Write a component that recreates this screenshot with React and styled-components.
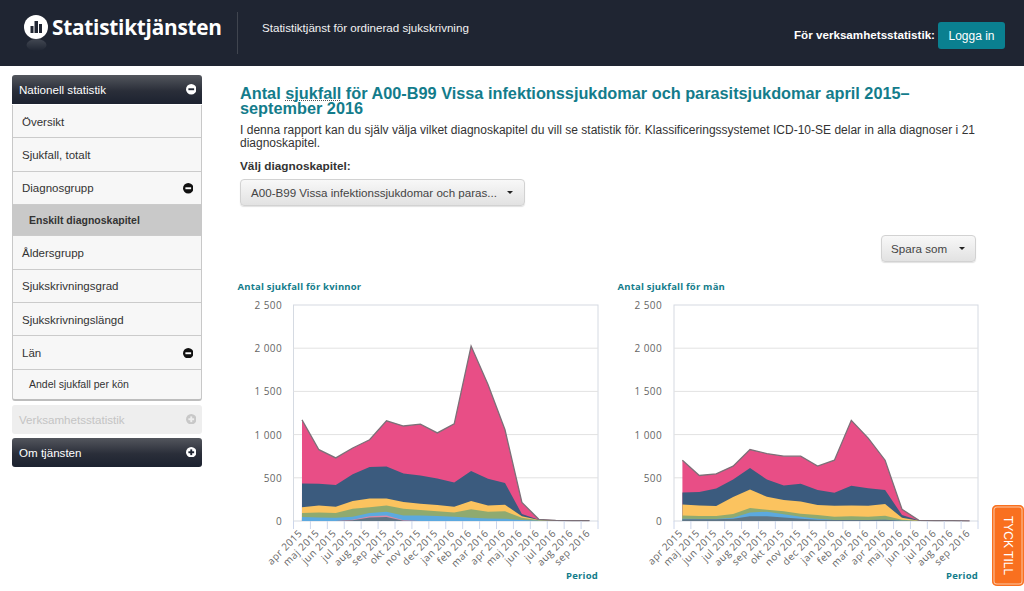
import React from "react";
import styled, { createGlobalStyle } from "styled-components";

const Global = createGlobalStyle`
  html, body { margin: 0; padding: 0; background: #fff; overflow: hidden; height: 591px; }
  body { font-family: "Liberation Sans", Arial, sans-serif; font-size: 12px; color: #333; }
  * { box-sizing: border-box; }
`;

const Page = styled.div`position: relative; width: 1024px; height: 591px; overflow: hidden;`;
const Header = styled.header`
  height: 66px; background: #1f2532; display: flex; align-items: flex-start; color: #fff;
`;
const Brand = styled.div`
  width: 237px; height: 42px; margin-top: 12px; padding-left: 24px; display: flex; align-items: flex-start; gap: 3px;
`;
const BrandName = styled.span`
  font-family: "Open Sans", sans-serif; font-weight: 700; font-size: 20.8px; line-height: 31px; letter-spacing: -0.25px; color: #fff;
`;
const Divider = styled.div`width: 1px; height: 42px; margin-top: 12px; background: #40454f;`;
const Tagline = styled.div`margin: 21px 0 0 24px; font-size: 11.6px; line-height: 14px; color: #f2f2f2; flex: 1;`;
const LoginLabel = styled.div`margin-top: 28px; font-weight: 700; font-size: 11.65px; line-height: 14px;`;
const LoginButton = styled.button`
  margin: 22px 19px 0 3px; width: 67px; height: 27px; background: #0a8090; color: #fff; border: 0; border-radius: 3px;
  font: 12px "Liberation Sans", sans-serif;
`;
const Body = styled.div`display: flex; padding-left: 12px;`;
const Sidebar = styled.nav`width: 190px; margin-top: 9px; flex: none;`;
const AccordionHead = styled.div`
  display: flex; align-items: center; justify-content: space-between; height: 29px; padding: 0 6px 0 7px;
  font-size: 11.6px; border-radius: ${p => p.$open ? "3px 3px 0 0" : "3px"};
  color: ${p => p.$disabled ? "#c4c4c4" : "#fff"};
  background: ${p => p.$disabled ? "#eeeeee" : "linear-gradient(#53565d, #2a2e39 55%, #1c2230)"};
  margin-top: ${p => p.$gap || 0}px;
`;
const Menu = styled.div`
  margin-top: 1px; border: 1px solid #c8c8c8; border-top: 0; border-bottom: 2px solid #bdbdbd; border-radius: 0 0 3px 3px; background: #f7f7f7;
`;
const MenuItem = styled.div`
  display: flex; align-items: center; justify-content: space-between; height: ${p => p.$h || 33.4}px;
  padding: ${p => p.$sub ? 0 : 1}px 8px 0 ${p => p.$sub ? 16 : 9}px; border-bottom: ${p => p.$last ? 0 : "1px solid #cbcbcb"};
  color: #333; font-size: ${p => p.$sub ? "10.5px" : "11.5px"};
  font-weight: ${p => p.$active ? 700 : 400};
  background: ${p => p.$active ? "#c9c9c9" : "transparent"};
`;
const Main = styled.main`flex: none; margin-left: 38px; padding-top: 18px; width: 736px;`;
const Title = styled.h1`
  margin: 0; padding-top: 2px; width: 680px; font-size: 16.3px; line-height: 15px; font-weight: 700; color: #137c8b;
`;
const Dotted = styled.abbr`text-decoration: underline dotted #555 1px; text-underline-offset: 1px;`;
const Lead = styled.p`
  margin: 8px 0 0; width: 735px; font-size: 12px; line-height: 13px; text-align: justify; color: #333;
`;
const Label = styled.div`margin-top: 9px; font-size: 11.8px; font-weight: 700; line-height: 14px; color: #333;`;
const Dropdown = styled.div`
  display: flex; align-items: center; justify-content: space-between; height: 27px; width: ${p => p.$w}px;
  padding: ${p => p.$pad}; border: 1px solid #d2d2d2; border-radius: 4px; white-space: nowrap;
  background: linear-gradient(#f8f8f8, #e2e2e2); box-shadow: 0 1px 1px rgba(0,0,0,.12);
  font-size: 11.6px; color: #444;
`;
const Caret = styled.i`
  width: 0; height: 0; border: 3.5px solid transparent; border-top-color: #222; border-bottom: 0; display: block;
`;
const SaveRow = styled.div`display: flex; justify-content: flex-end; margin: 29px 0 0;`;
const SelectWrap = styled.div`margin-top: 6px;`;
const Charts = styled.section`display: flex; margin: 15px 0 0 -10px;`;
const Feedback = styled.div`
  position: absolute; right: 0; top: 505px; width: 32px; height: 81px; background: #f9701f; border-radius: 5px;
  display: flex; align-items: center; justify-content: center; box-shadow: inset 0 0 0 1.5px #f9701f, inset 0 0 0 2.5px #fbc7a6;
`;
const FeedbackText = styled.span`
  writing-mode: vertical-rl; color: #fff; font-size: 12px; line-height: 14px; white-space: nowrap; margin-right: 1px;
`;

const Icon = ({ bg, fg, plus }) => (
  <svg width="10.5" height="10.5" viewBox="0 0 11 11">
    <circle cx="5.5" cy="5.5" r="5.5" fill={bg} />
    <rect x="2.5" y="4.5" width="6" height="2" fill={fg} />
    {plus && <rect x="4.5" y="2.5" width="2" height="6" fill={fg} />}
  </svg>
);

const Logo = () => (
  <svg width="25" height="42" viewBox="0 0 25 42">
    <defs>
      <linearGradient id="refl" x1="0" y1="0" x2="0" y2="1">
        <stop offset="0" stopColor="#fff" stopOpacity=".16" />
        <stop offset="1" stopColor="#fff" stopOpacity="0" />
      </linearGradient>
    </defs>
    <ellipse cx="12.5" cy="33" rx="10" ry="6" fill="url(#refl)" />
    <circle cx="12" cy="15" r="12" fill="#fff" />
    <rect x="6.5" y="14" width="3" height="7" fill="#1f2532" />
    <rect x="10.5" y="9" width="3.5" height="12" fill="#1f2532" />
    <rect x="15" y="12" width="3" height="9" fill="#1f2532" />
  </svg>
);

const months = ["apr 2015","maj 2015","jun 2015","jul 2015","aug 2015","sep 2015","okt 2015","nov 2015","dec 2015","jan 2016","feb 2016","mar 2016","apr 2016","maj 2016","jun 2016","jul 2016","aug 2016","sep 2016"];
const womenColors = ["#e84e86", "#3b5b7e", "#fbc35f", "#8faa70", "#5ca9df", "#d98aa8", "#5f7585"];
const menColors = ["#e84e86", "#3b5b7e", "#fbc35f", "#8faa70", "#5ca9df", "#5f7585"];

const women = [
  [1170,825,730,845,940,1160,1100,1120,1020,1125,2025,1580,1055,215,20,8,5,3],
  [435,430,415,540,625,632,550,528,492,445,580,490,440,80,15,6,4,2],
  [160,180,165,230,262,260,220,200,185,165,232,180,188,55,10,4,3,1],
  [92,100,92,142,160,180,142,127,112,100,135,108,112,38,8,3,2,1],
  [45,42,38,50,92,108,65,65,58,50,38,30,27,12,3,1,1,0],
  [0,0,0,14,55,62,8,0,0,0,0,0,0,0,0,0,0,0],
  [0,0,0,8,42,45,3,0,0,0,0,0,0,0,0,0,0,0],
];
const men = [
  [704,527,546,635,827,780,750,750,635,704,1165,960,704,135,8,4,3,2],
  [330,335,377,480,615,480,410,430,358,327,408,380,358,70,5,3,2,1],
  [192,180,173,277,365,280,242,227,185,177,180,177,196,38,4,2,1,1],
  [65,58,58,80,150,130,112,85,70,50,54,50,60,15,2,1,1,0],
  [25,22,22,38,100,108,77,50,27,12,12,10,14,4,1,0,0,0],
  [20,20,20,25,55,55,40,25,15,10,12,10,15,3,0,0,0,0],
];

const AxisText = styled.text`
  font-family: "Open Sans", sans-serif; font-size: 10px; fill: #666; letter-spacing: 0.4px;
`;
const ChartHeading = styled.text`
  font-family: "Open Sans", sans-serif; font-size: 9.5px; font-weight: 700; fill: #137c8b; letter-spacing: 0.2px;
`;
const ChartSvg = styled.svg`display: block; flex: none;`;

const Chart = ({ title, layers, colors, left, width }) => {
  const right = 368, top = 24, bottom = 240;
  const step = (right - left) / 18;
  const px = i => left + step * (i + 0.5);
  const py = v => bottom - (v / 2500) * (bottom - top);
  const ticks = [0, 500, 1000, 1500, 2000, 2500];
  const area = vals => `M${px(0)},${bottom} ` + vals.map((v, i) => `L${px(i).toFixed(1)},${py(v).toFixed(1)}`).join(" ") + ` L${px(17)},${bottom} Z`;
  const line = vals => "M" + vals.map((v, i) => `${px(i).toFixed(1)},${py(v).toFixed(1)}`).join(" L");
  return (
    <ChartSvg width={width} height={314} viewBox={`0 -4 ${width} 314`}>
      <ChartHeading x="7.5" y="9">{title}</ChartHeading>
      <rect x={left} y={top} width={right - left} height={bottom - top} fill="#fff" stroke="#d5dae2" />
      {ticks.slice(1, 5).map(t => <line key={t} x1={left} x2={right} y1={py(t)} y2={py(t)} stroke="#e2e2e2" />)}
      {ticks.map(t => (
        <AxisText key={t} x="52" y={py(t) + 4} textAnchor="end">{t.toLocaleString("sv-SE").replace(/\s/g, " ")}</AxisText>
      ))}
      {layers.map((vals, i) => <path key={i} d={area(vals)} fill={colors[i]} />)}
      <path d={line(layers[0])} fill="none" stroke="#7c7078" strokeWidth="1.3" />
      {months.map((_, i) => (
        <line key={i} x1={left + step * i} x2={left + step * i} y1={bottom} y2={bottom + 8} stroke="#ccd6eb" />
      ))}
      <line x1={right} x2={right} y1={bottom} y2={bottom + 8} stroke="#ccd6eb" />
      {months.map((m, i) => (
        <AxisText key={m} x={px(i) + 1} y="253" textAnchor="end" transform={`rotate(-45 ${px(i) + 1} 253)`}>{m}</AxisText>
      ))}
      <ChartHeading x={right} y="298" textAnchor="end">Period</ChartHeading>
    </ChartSvg>
  );
};

export default function App() {
  return (
    <Page>
      <Global />
      <Header>
        <Brand><Logo /><BrandName>Statistiktjänsten</BrandName></Brand>
        <Divider />
        <Tagline>Statistiktjänst för ordinerad sjukskrivning</Tagline>
        <LoginLabel>För verksamhetsstatistik:</LoginLabel>
        <LoginButton>Logga in</LoginButton>
      </Header>
      <Body>
        <Sidebar>
          <AccordionHead $open>Nationell statistik<Icon bg="#fff" fg="#1f2532" /></AccordionHead>
          <Menu>
            <MenuItem>Översikt</MenuItem>
            <MenuItem>Sjukfall, totalt</MenuItem>
            <MenuItem>Diagnosgrupp<Icon bg="#111" fg="#fff" /></MenuItem>
            <MenuItem $sub $active $h={31}>Enskilt diagnoskapitel</MenuItem>
            <MenuItem>Åldersgrupp</MenuItem>
            <MenuItem>Sjukskrivningsgrad</MenuItem>
            <MenuItem>Sjukskrivningslängd</MenuItem>
            <MenuItem>Län<Icon bg="#111" fg="#fff" /></MenuItem>
            <MenuItem $sub $h={29} $last>Andel sjukfall per kön</MenuItem>
          </Menu>
          <AccordionHead $disabled $gap={4}>Verksamhetsstatistik<Icon bg="#c8c8c8" fg="#eee" plus /></AccordionHead>
          <AccordionHead $gap={4}>Om tjänsten<Icon bg="#fff" fg="#1f2532" plus /></AccordionHead>
        </Sidebar>
        <Main>
          <Title>Antal <Dotted>sjukfall</Dotted> för A00-B99 Vissa infektionssjukdomar och parasitsjukdomar april 2015–september 2016</Title>
          <Lead>I denna rapport kan du själv välja vilket diagnoskapitel du vill se statistik för. Klassificeringssystemet ICD-10-SE delar in alla diagnoser i 21 diagnoskapitel.</Lead>
          <Label>Välj diagnoskapitel:</Label>
          <SelectWrap>
            <Dropdown $w={285} $pad="0 11px 0 10px">A00-B99 Vissa infektionssjukdomar och paras...<Caret /></Dropdown>
          </SelectWrap>
          <SaveRow>
            <Dropdown $w={95} $pad="0 10px 0 9px">Spara som<Caret /></Dropdown>
          </SaveRow>
          <Charts>
            <Chart title="Antal sjukfall för kvinnor" layers={women} colors={womenColors} left={63.5} width={380} />
            <Chart title="Antal sjukfall för män" layers={men} colors={menColors} left={64} width={380} />
          </Charts>
        </Main>
      </Body>
      <Feedback><FeedbackText>TYCK TILL</FeedbackText></Feedback>
    </Page>
  );
}
